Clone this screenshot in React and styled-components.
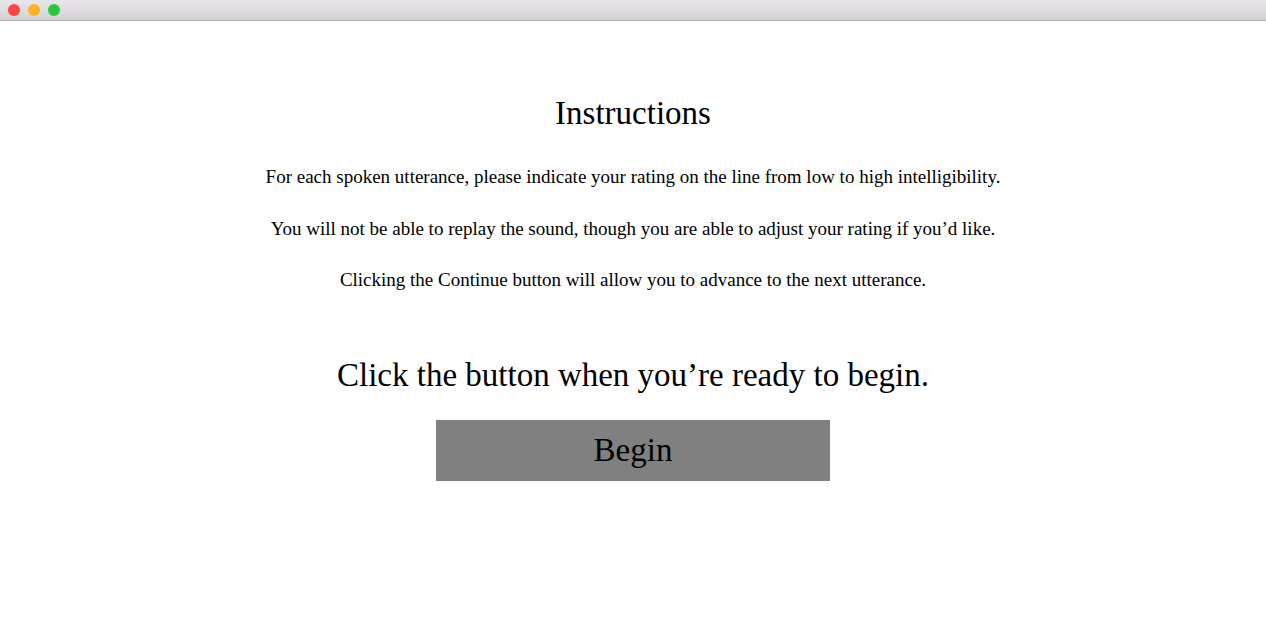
import React from 'react';
import styled, { createGlobalStyle } from 'styled-components';

const Global = createGlobalStyle`
  html, body {
    margin: 0;
    padding: 0;
    background: #fff;
  }
  body {
    font-family: "Liberation Serif", "Times New Roman", serif;
    color: #000;
  }
`;

const Window = styled.div`
  width: 1266px;
  height: 644px;
  display: flex;
  flex-direction: column;
  overflow: hidden;
`;

const TitleBar = styled.div`
  height: 21px;
  flex-shrink: 0;
  display: flex;
  align-items: center;
  gap: 8px;
  padding-left: 8px;
  background: linear-gradient(#e8e6e8, #d3d1d3);
  border-bottom: 1px solid #b3b1b3;
  box-sizing: border-box;
`;

const Light = styled.span`
  width: 12px;
  height: 12px;
  border-radius: 50%;
  background: ${({ color }) => color};
`;

const Content = styled.main`
  display: flex;
  flex-direction: column;
  align-items: center;
  padding-top: 73px;
`;

const Heading = styled.h1`
  font-size: 33px;
  font-weight: normal;
  margin: 0 0 34px;
  line-height: 38px;
`;

const Para = styled.p`
  font-size: 19px;
  margin: 0 0 29.5px;
  line-height: 22px;
`;

const Prompt = styled.h2`
  font-size: 33px;
  font-weight: normal;
  margin: 35.5px 0 26px;
  line-height: 38px;
`;

const BeginButton = styled.button`
  width: 394px;
  height: 61px;
  background: #808080;
  border: none;
  font-family: inherit;
  font-size: 33px;
  color: #000;
  padding: 0;
  cursor: pointer;
`;

export default function App() {
  return (
    <>
      <Global />
      <Window>
        <TitleBar>
          <Light color="#fc4443" />
          <Light color="#fdb225" />
          <Light color="#2ac840" />
        </TitleBar>
        <Content>
          <Heading>Instructions</Heading>
          <Para>For each spoken utterance, please indicate your rating on the line from low to high intelligibility.</Para>
          <Para>You will not be able to replay the sound, though you are able to adjust your rating if you’d like.</Para>
          <Para>Clicking the Continue button will allow you to advance to the next utterance.</Para>
          <Prompt>Click the button when you’re ready to begin.</Prompt>
          <BeginButton>Begin</BeginButton>
        </Content>
      </Window>
    </>
  );
}
